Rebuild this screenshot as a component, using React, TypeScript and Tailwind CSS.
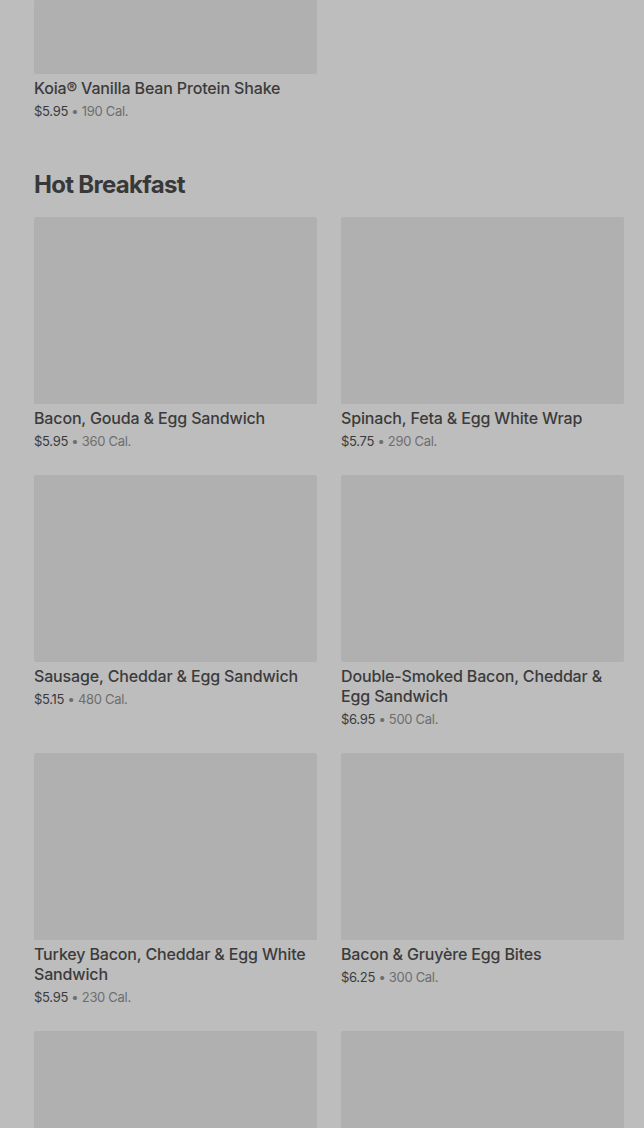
const hotBreakfast = [
  { name: "Bacon, Gouda & Egg Sandwich", price: "$5.95", cal: "360 Cal." },
  { name: "Spinach, Feta & Egg White Wrap", price: "$5.75", cal: "290 Cal." },
  { name: "Sausage, Cheddar & Egg Sandwich", price: "$5.15", cal: "480 Cal." },
  { name: "Double-Smoked Bacon, Cheddar & Egg Sandwich", price: "$6.95", cal: "500 Cal." },
  { name: "Turkey Bacon, Cheddar & Egg White Sandwich", price: "$5.95", cal: "230 Cal." },
  { name: "Bacon & Gruyère Egg Bites", price: "$6.25", cal: "300 Cal." },
  { name: "", price: "", cal: "" },
  { name: "", price: "", cal: "" },
];

function MenuCard({ name, price, cal, imageClass = "h-[187px]" }: { name: string; price: string; cal: string; imageClass?: string }) {
  return (
    <div className="flex flex-col">
      <div className={`${imageClass} w-full rounded-[2px] bg-[#b0b0b0]`} />
      {name && (
        <>
          <div className="mt-1 text-[16px] leading-[20px] font-medium tracking-[-0.15px] text-[#3b3b3b]">{name}</div>
          <div className="mt-1 text-[13px] leading-[18px] tracking-[-0.3px] text-[#3b3b3b]">
            {price}
            <span className="text-[#6e6e6e]"> • {cal}</span>
          </div>
        </>
      )}
    </div>
  );
}

export default function App() {
  return (
    <div
      className="min-h-[1128px] bg-[#bdbdbd] pl-[34px] pr-[20px]"
      style={{ fontFamily: "Inter, 'Liberation Sans', sans-serif" }}
    >
      {/* previous section, scrolled off the top */}
      <div className="grid grid-cols-2 gap-x-6">
        <MenuCard name="Koia® Vanilla Bean Protein Shake" price="$5.95" cal="190 Cal." imageClass="h-[74px]" />
      </div>

      <h2 className="mt-12 mb-4 text-[24px] leading-[33px] font-bold tracking-[-0.7px] text-[#383838]">
        Hot Breakfast
      </h2>

      <div className="grid grid-cols-2 gap-x-6 gap-y-[25px]">
        {hotBreakfast.map((item, i) => (
          <MenuCard key={i} {...item} />
        ))}
      </div>
    </div>
  );
}
